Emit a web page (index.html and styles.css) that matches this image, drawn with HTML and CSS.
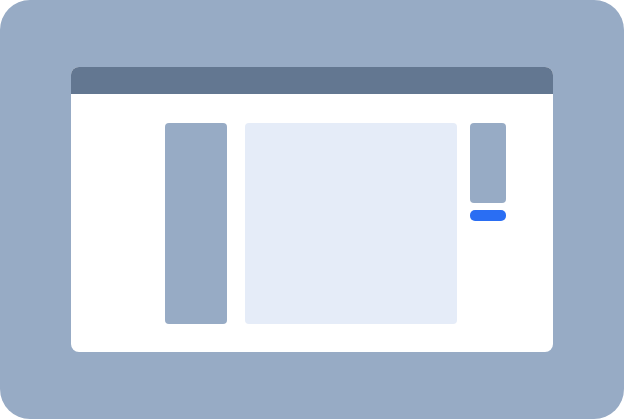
FILE: index.html
```html
<!DOCTYPE html>
<html>
<head>
<meta charset="utf-8">
<link rel="stylesheet" href="styles.css">
</head>
<body>
<div class="frame">
  <div class="window">
    <div class="titlebar"></div>
    <div class="content">
      <div class="sidebar"></div>
      <div class="main"></div>
      <div class="aside">
        <div class="aside-box"></div>
        <div class="aside-btn"></div>
      </div>
    </div>
  </div>
</div>
</body>
</html>
```
FILE: styles.css
```css
html, body {
  margin: 0;
  padding: 0;
  background: #ffffff;
}
.frame {
  width: 624px;
  height: 419px;
  box-sizing: border-box;
  padding: 67px 71px 67px 71px;
  background: #97abc5;
  border-radius: 30px;
}
.window {
  height: 285px;
  background: #ffffff;
  border-radius: 8px;
  overflow: hidden;
  display: flex;
  flex-direction: column;
}
.titlebar {
  height: 27px;
  background: #637791;
  flex: none;
}
.content {
  flex: 1;
  display: flex;
  padding: 29px 47px 28px 94px;
}
.sidebar {
  width: 62px;
  background: #97abc5;
  border-radius: 4px;
}
.main {
  width: 212px;
  margin-left: 18px;
  background: #e5ecf8;
  border-radius: 4px;
}
.aside {
  width: 36px;
  margin-left: 13px;
  display: flex;
  flex-direction: column;
  gap: 7px;
}
.aside-box {
  height: 80px;
  background: #97abc5;
  border-radius: 4px;
}
.aside-btn {
  height: 11px;
  background: #2a6ef3;
  border-radius: 5px;
}
```
